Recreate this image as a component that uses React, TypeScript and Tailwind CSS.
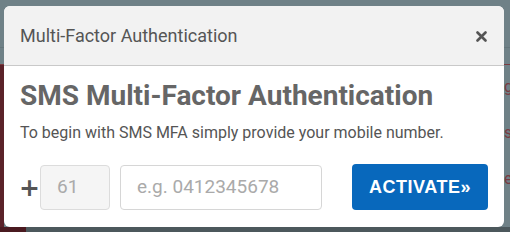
import React from 'react';

export default function App() {
  return (
    <div className="relative h-[232px] w-[510px] overflow-hidden bg-[#6f8187] font-['Roboto',sans-serif]">
      {/* page behind the backdrop */}
      <div className="flex h-full flex-col">
        <div className="h-[48px] border-b border-[#65767c]" />
        <div className="mt-[16px] flex flex-1 border-t border-[#7a3b40]">
          <div className="w-[4px] bg-[#5b2229]" />
          <div className="flex-1" />
          <div className="flex w-[6px] flex-col gap-[30px] overflow-hidden pt-[14px] text-[16px] leading-none text-[#7a3b40]">
            <span>g</span>
            <span>s</span>
            <span>e</span>
          </div>
        </div>
        <div className="flex h-[5px]">
          <div className="w-[26px] bg-[#4a1a20]" />
          <div className="flex-1 bg-[#4c585c]" />
        </div>
      </div>

      {/* dialog */}
      <div className="absolute left-[4px] top-[6px] h-[221px] w-[500px] overflow-hidden rounded-[6px] bg-white">
        <div className="flex h-[60px] items-center justify-between border-b border-[#c9c9c9] bg-[#f2f2f2] pl-[16px] pr-[17px]">
          <span className="text-[18px] text-[#555]">Multi-Factor Authentication</span>
          <svg width="11" height="11" viewBox="0 0 11 11" className="mt-[1px]">
            <path d="M1.5 1.5 L9.5 9.5 M9.5 1.5 L1.5 9.5" stroke="#555" strokeWidth="2.6" strokeLinecap="round" />
          </svg>
        </div>
        <div className="px-[16px] pt-[13px]">
          <h1 className="text-[28px] font-bold leading-[33px] text-[#666]">SMS Multi-Factor Authentication</h1>
          <p className="mt-[10px] text-[16px] leading-[22px] text-[#555]">
            To begin with SMS MFA simply provide your mobile number.
          </p>
          <div className="mt-[20px] flex items-center">
            <span className="-ml-px w-[21px] font-['DejaVu_Sans',sans-serif] text-[25px] font-bold leading-none text-[#555]">+</span>
            <div className="flex h-[45px] w-[70px] items-center rounded-[4px] border border-[#dcdcdc] bg-[#f5f5f5] pl-[16px] text-[19px] text-[#aaa]">
              61
            </div>
            <div className="ml-[10px] flex h-[45px] w-[202px] items-center rounded-[4px] border border-[#d6d6d6] bg-white pl-[16px] text-[19px] text-[#aaa]">
              e.g. 0412345678
            </div>
            <button className="ml-[30px] flex h-[46px] w-[136px] items-center justify-center rounded-[4px] bg-[#0868bc] font-['Liberation_Sans',sans-serif] text-[18px] font-bold tracking-[0.5px] text-white">
              ACTIVATE»
            </button>
          </div>
        </div>
      </div>
    </div>
  );
}
